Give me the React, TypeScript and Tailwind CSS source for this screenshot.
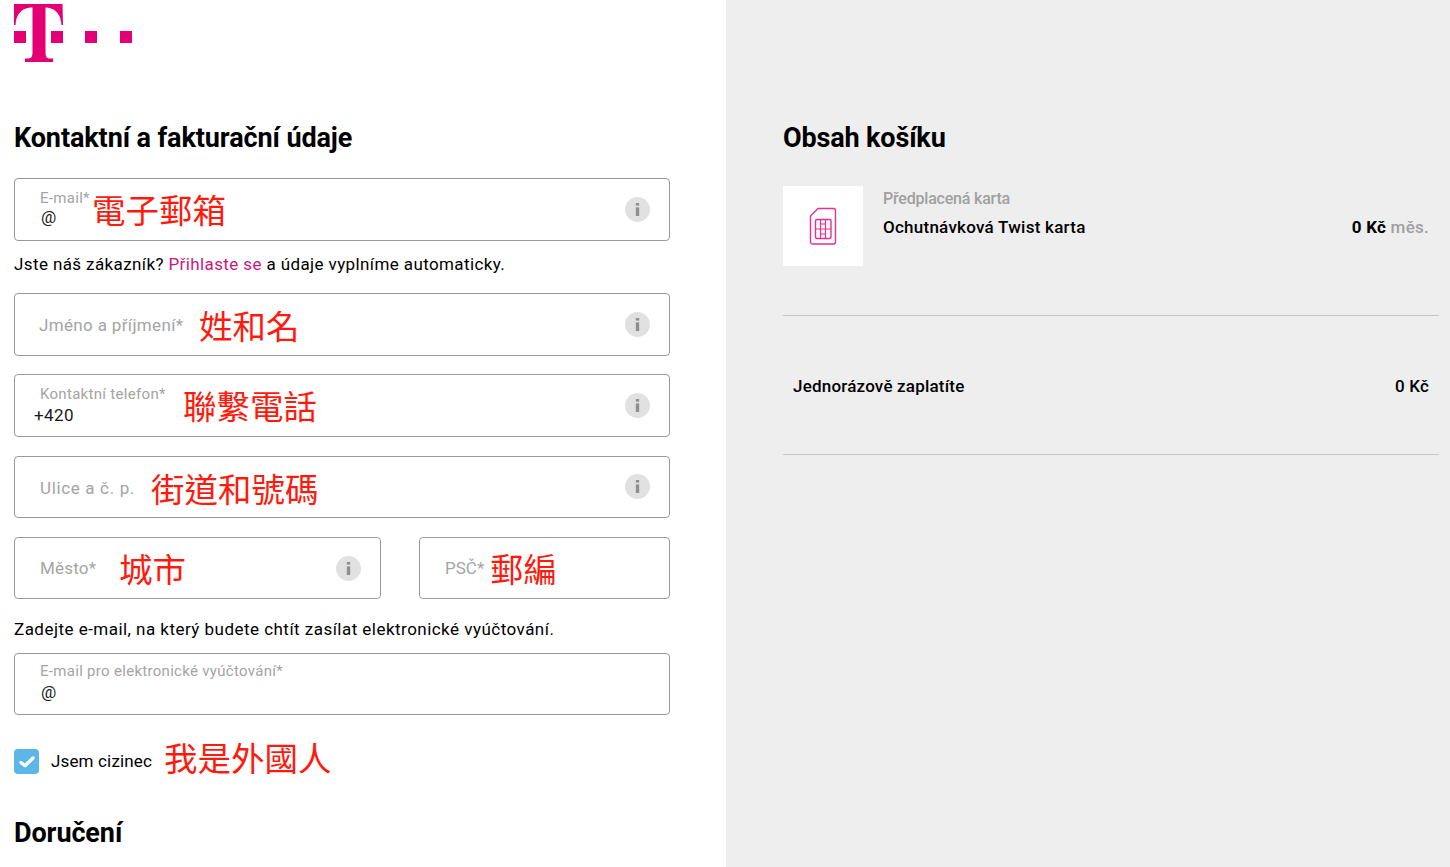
import React from 'react';

const Info = () => (
  <div className="w-[25px] h-[25px] rounded-full bg-[#e1e1e1] flex items-center justify-center shrink-0">
    <svg width="5" height="13" viewBox="0 0 5 13" fill="#8f8f8f">
      <rect x="0.8" y="0" width="3.4" height="2.6" />
      <rect x="0.8" y="4.4" width="3.4" height="8.6" />
    </svg>
  </div>
);

const Logo = () => (
  <svg width="119" height="58" viewBox="0 0 119 58" fill="#e20074" className="block">
    <path d="M0 0H48.5L49 21H47.5C47 11 42 4.5 33 3.5H31.5V48C31.5 52.5 32.5 54.5 36 54.5H39V58H11V54.5H14C17.5 54.5 18.5 52.5 18.5 48V3.5H16C7 4.5 2 11 1.5 21H0Z" />
    <rect x="0" y="27" width="12" height="12" />
    <rect x="37" y="27" width="12" height="12" />
    <rect x="71" y="27" width="12" height="12" />
    <rect x="106" y="27" width="12" height="12" />
  </svg>
);

const Sim = () => (
  <svg width="28" height="38" viewBox="0 0 28 38" fill="none" stroke="#ec2d8f" strokeWidth="1.4" strokeLinejoin="round">
    <path d="M9 1.5H24.5C25.5 1.5 26.5 2.5 26.5 3.5V35C26.5 36 25.5 37 24.5 37H3.5C2.5 37 1.5 36 1.5 35V9Z" />
    <rect x="6.5" y="12.5" width="15.5" height="19" rx="1.5" />
    <path d="M6.5 22H22M11.5 12.5V22M16.5 12.5V22M11.5 17H16.5M11.5 22V31.5M16.5 22V31.5M11.5 27H16.5" strokeWidth="1.2" />
  </svg>
);

type FieldProps = {
  label: string;
  value?: string;
  valueClass?: string;
  cn: string;
  labelClass?: string;
  info?: boolean;
  infoClass?: string;
  zh?: string;
  zhClass?: string;
};

const Field = ({ label, value, valueClass, cn, labelClass, info = true, infoClass, zh, zhClass }: FieldProps) => (
  <div className={`relative border border-[#999] rounded-[4px] ${cn}`}>
    {value ? (
      <>
        <div className={`absolute left-[25px] text-[15px] leading-5 tracking-[0.3px] text-[#a4a4a4] whitespace-nowrap ${labelClass ?? 'top-[9px]'}`}>{label}</div>
        <div className={`absolute text-[17px] leading-5 text-[#1a1a1a] ${valueClass ?? 'left-[26px] top-[28px]'}`}>{value}</div>
      </>
    ) : (
      <div className={`absolute text-[17px] leading-5 text-[#a4a4a4] whitespace-nowrap ${labelClass ?? 'left-[25px] top-[20px] tracking-[0.2px]'}`}>{label}</div>
    )}
    {zh && (
      <span className={`absolute text-[33.5px] leading-10 text-[#ff1a0e] whitespace-nowrap ${zhClass ?? ''}`}>{zh}</span>
    )}
    {info && (
      <div className={`absolute right-[19px] ${infoClass ?? 'top-[18px]'}`}>
        <Info />
      </div>
    )}
  </div>
);

export default function App() {
  return (
    <div className="flex h-[867px] overflow-hidden font-['Roboto','Noto_Sans_CJK_TC',sans-serif] text-black">
      <div className="w-[726px] shrink-0 pl-[14px] pt-[4px] bg-white">
        <Logo />
        <h1 className="mt-[57px] text-[27px] leading-[38px] font-bold tracking-[-0.1px]">Kontaktní a fakturační údaje</h1>

        <div className="w-[656px] mt-[21px]">
          <Field
            cn="h-[63px]"
            label="E-mail*"
            value="@"
            zh="電子郵箱"
            zhClass="left-[77px] top-[13px]"
          />
          <p className="mt-[13px] text-[17px] leading-5 tracking-[0.39px]">
            Jste náš zákazník? <span className="text-[#c9177e]">Přihlaste se</span> a údaje vyplníme automaticky.
          </p>
          <Field
            cn="h-[63px] mt-[19px]"
            label="Jméno a příjmení*"
            labelClass="left-[24px] top-[21px] tracking-[0.35px]"
            zh="姓和名"
            zhClass="left-[184px] top-[14px]"
          />
          <Field
            cn="h-[63px] mt-[18px]"
            label="Kontaktní telefon*"
            value="+420"
            valueClass="left-[19px] top-[30px] tracking-[0.4px]"
            zh="聯繫電話"
            zhClass="left-[168px] top-[13px]"
          />
          <Field
            cn="h-[62px] mt-[19px]"
            label="Ulice a č. p."
            labelClass="left-[25px] top-[21px] tracking-[0.65px]"
            infoClass="top-[17px]"
            zh="街道和號碼"
            zhClass="left-[136px] top-[14px]"
          />
          <div className="flex justify-between mt-[19px]">
            <Field
              cn="w-[367px] h-[62px]"
              label="Město*"
              zh="城市"
              zhClass="left-[104px] top-[13px]"
            />
            <Field
              cn="w-[251px] h-[62px]"
              label="PSČ*"
              labelClass="left-[25px] top-[20px]"
              info={false}
              zh="郵編"
              zhClass="left-[70px] top-[13px]"
            />
          </div>
          <p className="mt-[20px] text-[17px] leading-5 tracking-[0.47px]">
            Zadejte e-mail, na který budete chtít zasílat elektronické vyúčtování.
          </p>
          <Field
            cn="h-[62px] mt-[14px]"
            label="E-mail pro elektronické vyúčtování*"
            labelClass="top-[7px]"
            value="@"
            info={false}
          />

          <div className="relative flex items-center gap-[12px] mt-[34px] h-[25px]">
            <div className="w-[25px] h-[25px] rounded-[4px] bg-[#5cb7e6] flex items-center justify-center">
              <svg width="16" height="12" viewBox="0 0 16 12" fill="none" stroke="#fff" strokeWidth="3.4" strokeLinecap="round" strokeLinejoin="round">
                <path d="M2 6.5L6 9.8L14 2" />
              </svg>
            </div>
            <span className="text-[17px] tracking-[0.15px]">Jsem cizinec</span>
            <span className="absolute left-[150px] top-[-9px] text-[33.5px] leading-10 text-[#ff1a0e] whitespace-nowrap">我是外國人</span>
          </div>
        </div>

        <h2 className="mt-[40px] text-[27px] leading-[38px] font-bold tracking-[-0.1px]">Doručení</h2>
      </div>

      <div className="flex-1 bg-[#eeeeee] pl-[57px] pr-[11px] pt-[119px]">
        <h2 className="text-[27px] leading-[38px] font-bold tracking-[-0.15px]">Obsah košíku</h2>
        <div className="flex mt-[29px] h-[80px]">
          <div className="w-[80px] h-[80px] bg-white flex items-center justify-center shrink-0">
            <Sim />
          </div>
          <div className="flex-1 pl-[20px] pr-[10px] pt-[3px]">
            <div className="text-[16px] leading-5 tracking-[-0.2px] font-medium text-[#a0a0a0]">Předplacená karta</div>
            <div className="flex justify-between mt-[8px] text-[17px] leading-5 font-medium tracking-[0.25px]">
              <span>Ochutnávková Twist karta</span>
              <span className="font-bold">
                0 Kč <span className="text-[#a0a0a0] font-medium">měs.</span>
              </span>
            </div>
          </div>
        </div>
        <div className="mt-[49px] border-t border-[#c6c6c6]" />
        <div className="flex justify-between pl-[10px] pr-[10px] mt-[60px] text-[17px] leading-5 font-medium tracking-[0.2px]">
          <span>Jednorázově zaplatíte</span>
          <span>0 Kč</span>
        </div>
        <div className="mt-[58px] border-t border-[#c6c6c6]" />
      </div>
    </div>
  );
}
